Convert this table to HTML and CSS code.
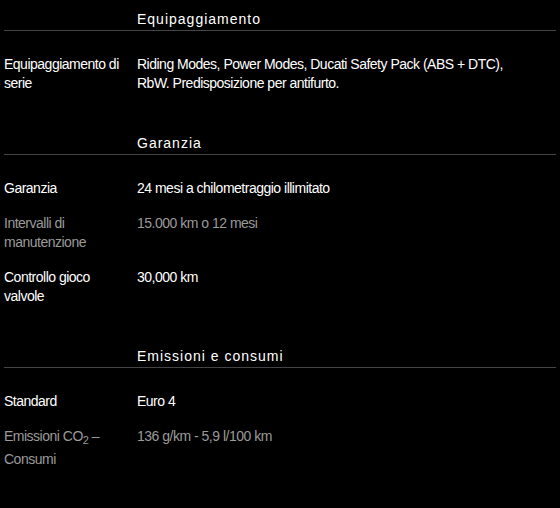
FILE: index.html
```html
<!DOCTYPE html>
<html lang="it">
<head>
<meta charset="utf-8">
<link rel="stylesheet" href="styles.css">
</head>
<body>
<div class="specs">
  <section class="group">
    <h2 class="group-title">Equipaggiamento</h2>
    <div class="row">
      <div class="label">Equipaggiamento di serie</div>
      <div class="value">Riding Modes, Power Modes, Ducati Safety Pack (ABS + DTC), RbW. Predisposizione per antifurto.</div>
    </div>
  </section>
  <section class="group">
    <h2 class="group-title">Garanzia</h2>
    <div class="row">
      <div class="label">Garanzia</div>
      <div class="value">24 mesi a chilometraggio illimitato</div>
    </div>
    <div class="row muted">
      <div class="label">Intervalli di manutenzione</div>
      <div class="value">15.000 km o 12 mesi</div>
    </div>
    <div class="row">
      <div class="label">Controllo gioco valvole</div>
      <div class="value">30,000 km</div>
    </div>
  </section>
  <section class="group">
    <h2 class="group-title">Emissioni e consumi</h2>
    <div class="row">
      <div class="label">Standard</div>
      <div class="value">Euro 4</div>
    </div>
    <div class="row muted">
      <div class="label">Emissioni CO<sub>2</sub> – Consumi</div>
      <div class="value">136 g/km - 5,9 l/100 km</div>
    </div>
  </section>
</div>
</body>
</html>
```

FILE: styles.css
```css
html, body {
  margin: 0;
  padding: 0;
  background: #000;
}
body {
  font-family: "Liberation Sans", Arial, sans-serif;
  color: #fff;
  width: 560px;
  height: 508px;
  overflow: hidden;
}
.specs {
  padding: 9px 4px 0 4px;
}
.group {
  margin-bottom: 40px;
}
.group-title {
  margin: 0 0 24px 0;
  padding: 0 0 1px 133px;
  font-size: 14px;
  font-weight: normal;
  line-height: 20px;
  letter-spacing: 1px;
  border-bottom: 1px solid #444;
}
.row {
  display: grid;
  grid-template-columns: 120px 375px;
  column-gap: 13px;
  font-size: 14px;
  line-height: 19px;
  letter-spacing: -0.5px;
  margin-bottom: 16px;
}
.row:last-child {
  margin-bottom: 0;
}
.muted {
  color: #9a9a9a;
}
sub {
  font-size: 11px;
  line-height: 19px;
  vertical-align: -3px;
}
```
